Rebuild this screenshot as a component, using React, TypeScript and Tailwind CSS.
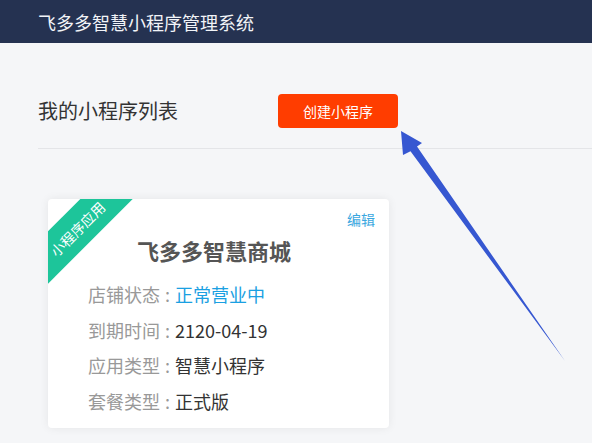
import React from "react";

const font = { fontFamily: '"Noto Sans CJK SC", "Noto Sans", sans-serif' };

function Row({ label, value, valueClass }: { label: string; value: string; valueClass: string }) {
  return (
    <div className="flex items-center h-[35.5px] text-[18px]">
      <span className="text-[#999999]">{label}</span>
      <span className="w-[15px] text-center text-[#999999]">:</span>
      <span className={valueClass}>{value}</span>
    </div>
  );
}

export default function App() {
  return (
    <div className="relative w-[592px] h-[443px] overflow-hidden bg-[#f5f6f8]" style={font}>
      <div className="h-[43px] bg-[#253251] flex items-center pl-[38px]">
        <span className="text-[18px] text-[#f2f4f8] leading-none">飞多多智慧小程序管理系统</span>
      </div>
      <div className="pl-[38px]">
        <div className="flex items-center mt-[51px] h-[34px]">
          <span className="w-[140px] text-[20px] text-[#333333] leading-none whitespace-nowrap">我的小程序列表</span>
          <button className="ml-[100px] w-[120px] h-[34px] rounded-[4px] bg-[#ff3d00] text-white text-[14px] flex items-center justify-center">
            创建小程序
          </button>
        </div>
        <div className="mt-[20px] h-px bg-[#e4e5e8]" />
        <div className="mt-[50px] ml-[10px] relative w-[341px] h-[229px] bg-white rounded-[4px] shadow-[0_0_10px_rgba(0,0,0,0.07)] overflow-hidden">
          <div className="absolute left-[-51px] top-[10.5px] w-[160px] h-[37px] bg-[#1dc59a] -rotate-45 flex items-center justify-center">
            <span className="text-white text-[14px] leading-none">小程序应用</span>
          </div>
          <span className="absolute top-[10px] right-[14px] text-[14px] text-[#3aa7e0]">编辑</span>
          <div className="pt-[36px] pr-[9px] text-center h-[66px] text-[22px] leading-[30px] font-bold text-[#555555]">
            飞多多智慧商城
          </div>
          <div className="mt-[12px] pl-[40px]">
            <Row label="店铺状态" value="正常营业中" valueClass="text-[#1aa0e2]" />
            <Row label="到期时间" value="2120-04-19" valueClass="text-[#333333]" />
            <Row label="应用类型" value="智慧小程序" valueClass="text-[#333333]" />
            <Row label="套餐类型" value="正式版" valueClass="text-[#333333]" />
          </div>
        </div>
      </div>
      <svg className="absolute inset-0 pointer-events-none" width="592" height="443" viewBox="0 0 592 443">
        <polygon points="401,131 422,143 417,146.6 565,361 410.5,151.2 403,155" fill="#3657d1" />
      </svg>
    </div>
  );
}
